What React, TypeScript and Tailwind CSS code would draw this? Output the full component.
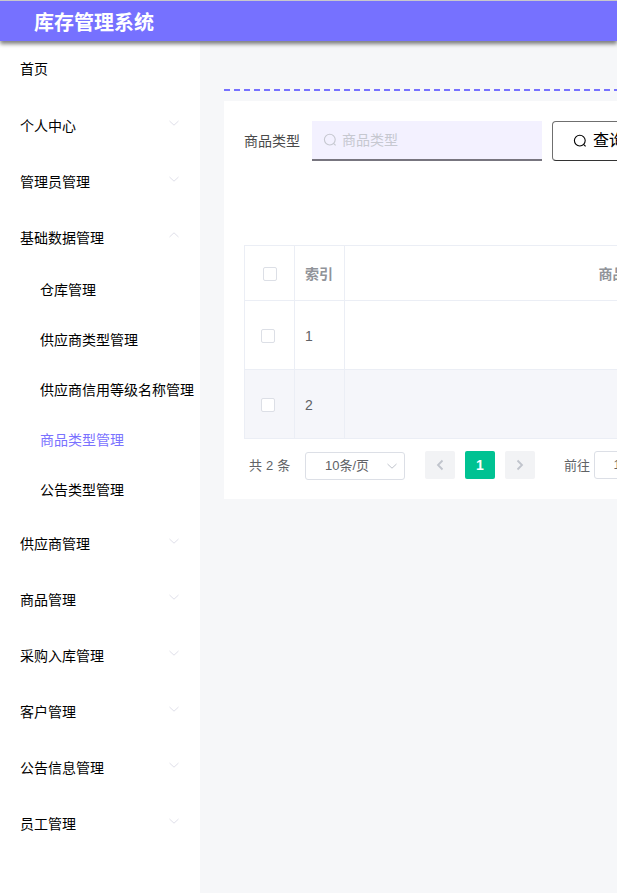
import React from "react";

const Chevron = ({ up = false, className = "" }: { up?: boolean; className?: string }) => (
  <svg width="12" height="12" viewBox="0 0 12 12" fill="none" stroke="currentColor" strokeWidth="1" className={className}>
    {up ? <path d="M1.5 8 L6 3.8 L10.5 8" /> : <path d="M1.5 4 L6 8.2 L10.5 4" />}
  </svg>
);

const Search = ({ className = "" }: { className?: string }) => (
  <svg width="14" height="14" viewBox="0 0 14 14" fill="none" stroke="currentColor" strokeWidth="1.1" className={className}>
    <circle cx="6.8" cy="6.6" r="5.4" />
    <path d="M10.8 10.6 L12.6 12.4" />
  </svg>
);

const Top = ({ label, h, chevron = true, up = false }: { label: string; h: string; chevron?: boolean; up?: boolean }) => (
  <div className={`flex items-center justify-between pl-5 pr-[20px] text-[14px] text-black ${h}`}>
    <span>{label}</span>
    {chevron && <Chevron up={up} className="text-[#e0e0ea] -mt-[7px]" />}
  </div>
);

const Sub = ({ label, active = false }: { label: string; active?: boolean }) => (
  <div className={`flex h-[50px] items-center pl-10 text-[14px] whitespace-nowrap ${active ? "text-[#7a72ff]" : "text-black"}`}>
    {label}
  </div>
);

const Box = ({ className = "" }: { className?: string }) => (
  <span className={`block h-[14px] w-[14px] rounded-[2px] border border-[#dcdfe6] bg-white ${className}`} />
);

const Row = ({ n, alt }: { n: string; alt?: boolean }) => (
  <div className={`flex h-[69px] border-b border-[#ebeef5] ${alt ? "bg-[#f5f6fa]" : "bg-white"}`}>
    <div className="flex w-[50px] shrink-0 items-center border-r border-[#ebeef5] pt-[2px] pl-[16px]">
      <Box />
    </div>
    <div className="flex w-[50px] shrink-0 items-center border-r border-[#ebeef5] pt-[2px] pl-[10px] text-[14px] text-[#606266]">{n}</div>
    <div className="w-[565px] shrink-0" />
  </div>
);

export default function App() {
  return (
    <div className="h-[893px] w-[617px] overflow-hidden bg-[#f6f7f9] font-['Liberation_Sans','Noto_Sans_CJK_SC',sans-serif]">
      <div className="relative z-10 box-content h-[40px] border-t border-[#c8c8cc] bg-[#7671ff] pl-[34px] text-[20px] leading-[44px] font-bold text-white shadow-[0_3px_4px_rgba(0,0,0,0.5)]">
        库存管理系统
      </div>
      <div className="flex h-[852px]">
        <aside className="w-[200px] shrink-0 bg-white pt-[1px]">
          <Top label="首页" h="h-[54px]" chevron={false} />
          <Top label="个人中心" h="h-[56px] mt-[2px]" />
          <Top label="管理员管理" h="h-[56px]" />
          <Top label="基础数据管理" h="h-[56px]" up />
          <div className="-mt-[1px]">
            <Sub label="仓库管理" />
            <Sub label="供应商类型管理" />
            <Sub label="供应商信用等级名称管理" />
            <Sub label="商品类型管理" active />
            <Sub label="公告类型管理" />
          </div>
          <div className="mt-[1px]">
            <Top label="供应商管理" h="h-[56px]" />
            <Top label="商品管理" h="h-[56px]" />
            <Top label="采购入库管理" h="h-[56px]" />
            <Top label="客户管理" h="h-[56px]" />
            <Top label="公告信息管理" h="h-[56px]" />
            <Top label="员工管理" h="h-[56px]" />
          </div>
        </aside>
        <main className="min-w-0 flex-1 pt-[48px] pl-[24px]">
          <div className="h-[2px] bg-[repeating-linear-gradient(90deg,#7671ff_0,#7671ff_6px,transparent_6px,transparent_10px)]" />
          <div className="mt-[10px] h-[398px] w-[800px] bg-white px-[20px] pt-[20px]">
            <div className="flex h-[40px] items-center">
              <span className="w-[68px] text-[14px] text-[#4a4a4a]">商品类型</span>
              <div className="flex h-[40px] w-[230px] items-center border-b-2 border-[#77757f] bg-[#f3f1ff] pl-[11px] text-[14px] text-[#c6c8d0]">
                <Search className="mr-[5px] text-[#c6c8d0]" />
                商品类型
              </div>
              <div className="ml-[10px] flex h-[40px] w-[100px] items-center rounded-[4px] border border-[#6f6f6f] border-b-[#333] bg-white pl-[20px] text-[16px] text-black">
                <Search className="mr-[6px]" />
                查询
              </div>
            </div>
            <div className="mt-[84px] border-t border-l border-[#ebeef5]">
              <div className="flex h-[55px] border-b border-[#ebeef5]">
                <div className="flex w-[50px] shrink-0 items-center border-r border-[#ebeef5] pt-[2px] pl-[18px]">
                  <Box />
                </div>
                <div className="flex w-[50px] shrink-0 items-center border-r border-[#ebeef5] pt-[2px] pl-[10px] text-[14px] font-bold text-[#909399]">索引</div>
                <div className="flex w-[565px] shrink-0 items-center justify-center pt-[2px] pr-[2px] text-[14px] font-bold text-[#909399]">商品类型</div>
              </div>
              <Row n="1" />
              <Row n="2" alt />
            </div>
            <div className="mt-[12px] flex h-[30px] items-center text-[13px] text-[#606266]">
              <span className="ml-[5px] w-[56px] tracking-[0.2px]">共 2 条</span>
              <div className="relative flex h-[28px] w-[100px] items-center justify-center rounded-[3px] border border-[#dcdfe6] pr-[16px]">
                10条/页
                <Chevron className="absolute right-[6px] text-[#c0c4cc]" />
              </div>
              <div className="mb-[2px] ml-[20px] flex h-[28px] w-[30px] items-center justify-center rounded-[2px] bg-[#f2f3f5] text-[#c0c4cc]">
                <svg width="10" height="12" viewBox="0 0 10 12" fill="none" stroke="currentColor" strokeWidth="1.8"><path d="M7.5 1.5 L3 6 L7.5 10.5" /></svg>
              </div>
              <div className="mb-[2px] ml-[10px] flex h-[28px] w-[30px] items-center justify-center rounded-[2px] bg-[#00c292] text-[14px] font-bold text-white">1</div>
              <div className="mb-[2px] ml-[10px] flex h-[28px] w-[30px] items-center justify-center rounded-[2px] bg-[#f2f3f5] text-[#c0c4cc]">
                <svg width="10" height="12" viewBox="0 0 10 12" fill="none" stroke="currentColor" strokeWidth="1.8"><path d="M2.5 1.5 L7 6 L2.5 10.5" /></svg>
              </div>
              <span className="ml-[29px]">前往</span>
              <div className="mb-[2px] ml-[4px] flex h-[28px] w-[46px] items-center justify-center rounded-[3px] border border-[#dcdfe6]">1</div>
            </div>
          </div>
        </main>
      </div>
    </div>
  );
}
